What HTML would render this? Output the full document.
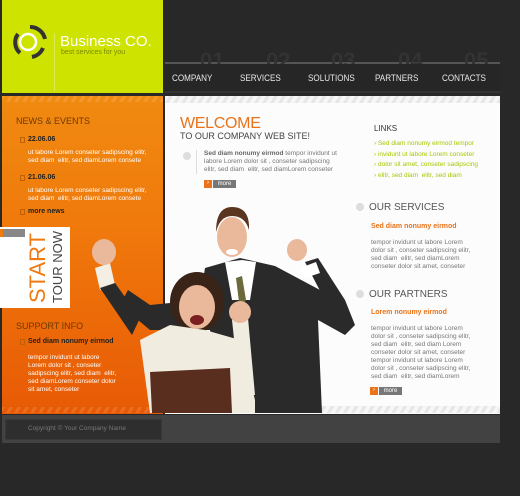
<!DOCTYPE html>
<html><head><meta charset="utf-8">
<style>
*{margin:0;padding:0;box-sizing:border-box}
body{width:520px;height:496px;background:#282828;position:relative;overflow:hidden;font-family:"Liberation Sans",sans-serif}
.a{position:absolute}
.nav span{position:absolute;top:73px;font-size:9px;color:#e8e8e8;font-family:"Liberation Sans Narrow","Liberation Sans",sans-serif;transform:scaleX(.9);transform-origin:left}
.num{position:absolute;top:48px;font-size:22px;font-weight:bold;color:#333}
.sm{font-size:6.5px;line-height:8px}
.stripe{background:repeating-linear-gradient(-60deg,rgba(255,255,255,.12) 0 3px,transparent 3px 7px)}
</style></head><body>
<div class="a" style="left:2px;top:0;width:161px;height:93px;background:#cfe300"></div>
<div class="a" style="left:54px;top:33px;width:1px;height:58px;background:#dcea55"></div>
<svg class="a" style="left:10px;top:22px" width="40" height="40" viewBox="0 0 40 40">
<circle cx="18" cy="20" r="8" fill="none" stroke="#fff" stroke-width="2.5"/>
<path d="M8 12 A14 14 0 0 0 10 31" fill="none" stroke="#333" stroke-width="4"/>
<path d="M20 5 A15 15 0 0 1 35 17" fill="none" stroke="#333" stroke-width="4"/>
<path d="M33 26 A15 15 0 0 1 22 35" fill="none" stroke="#333" stroke-width="4"/>
</svg>
<div class="a" style="left:60px;top:33px;font-size:15px;color:#fff">Business CO.</div>
<div class="a" style="left:61px;top:49px;font-size:7px;color:#7a8a00">best services for you</div>
<div class="a" style="left:165px;top:62px;width:335px;height:2px;background:#555"></div>
<div class="a" style="left:165px;top:91px;width:335px;height:2px;background:#333"></div>
<div class="num" style="left:200px">01</div><div class="num" style="left:266px">02</div><div class="num" style="left:331px">03</div><div class="num" style="left:398px">04</div><div class="num" style="left:464px">05</div>
<div class="a" style="left:165px;top:64px;width:335px;height:27px;background:#262626"></div>
<div class="nav"><span style="left:172px">COMPANY</span><span style="left:240px">SERVICES</span><span style="left:308px">SOLUTIONS</span><span style="left:375px">PARTNERS</span><span style="left:442px">CONTACTS</span></div>
<div class="a" style="left:2px;top:96px;width:161px;height:318px;background:linear-gradient(180deg,#f08a10 0%,#f07a0c 40%,#e85a05 100%)"></div>
<div class="a stripe" style="left:2px;top:96px;width:161px;height:6px"></div>
<div class="a stripe" style="left:2px;top:407px;width:161px;height:6px"></div>
<div class="a" style="left:16px;top:116px;font-size:9px;color:#6b3a00">NEWS &amp; EVENTS</div>
<div class="a" style="left:20px;top:137px;width:5px;height:6px;border:1px solid #c06000"></div>
<div class="a" style="left:28px;top:136px;font-size:7px;font-weight:bold;color:#222">22.06.06</div>
<div class="a sm" style="left:28px;top:149px;color:#fff">ut labore Lorem conseter sadipscing elitr,<br>sed diam&nbsp; elitr, sed diamLorem consete</div>
<div class="a" style="left:20px;top:175px;width:5px;height:6px;border:1px solid #c06000"></div>
<div class="a" style="left:28px;top:174px;font-size:7px;font-weight:bold;color:#222">21.06.06</div>
<div class="a sm" style="left:28px;top:187px;color:#fff">ut labore Lorem conseter sadipscing elitr,<br>sed diam&nbsp; elitr, sed diamLorem consete</div>
<div class="a" style="left:20px;top:209px;width:5px;height:6px;border:1px solid #c06000"></div>
<div class="a" style="left:28px;top:208px;font-size:7px;font-weight:bold;color:#222">more news</div>
<div class="a" style="left:0;top:227px;width:70px;height:81px;background:#fff"></div>
<div class="a" style="left:0;top:229px;width:25px;height:8px;background:#888"></div>
<div class="a" style="left:0;top:229px;width:3px;height:8px;background:#f07a0c"></div>
<div class="a" style="left:27px;top:303px;transform:rotate(-90deg);transform-origin:0 0;font-size:22px;color:#ef7a12;white-space:nowrap;line-height:22px">START</div>
<div class="a" style="left:50px;top:303px;transform:rotate(-90deg);transform-origin:0 0;font-size:13px;color:#444;white-space:nowrap;line-height:15px">TOUR NOW</div>
<div class="a" style="left:16px;top:321px;font-size:9px;color:#6b3a00">SUPPORT INFO</div>
<div class="a" style="left:20px;top:339px;width:5px;height:6px;border:1px solid #c06000"></div>
<div class="a" style="left:28px;top:338px;font-size:7px;font-weight:bold;color:#222">Sed diam nonumy eirmod</div>
<div class="a sm" style="left:28px;top:354px;color:#fff">tempor invidunt ut labore<br>Lorem dolor sit , conseter<br>sadipscing elitr, sed diam&nbsp; elitr,<br>sed diamLorem conseter dolor<br>sit amet, conseter</div>
<div class="a" style="left:165px;top:96px;width:335px;height:318px;background:#fcfcfc"></div>
<div class="a" style="left:165px;top:96px;width:335px;height:7px;background:repeating-linear-gradient(-60deg,#e6e6e6 0 3px,#f6f6f6 3px 7px)"></div>
<div class="a" style="left:165px;top:406px;width:335px;height:7px;background:repeating-linear-gradient(-60deg,#e6e6e6 0 3px,#f6f6f6 3px 7px)"></div>
<div class="a" style="left:180px;top:115px;font-size:16px;color:#e8731a;letter-spacing:-.3px">WELCOME</div>
<div class="a" style="left:180px;top:131px;font-size:9px;color:#444">TO OUR COMPANY WEB SITE!</div>
<div class="a" style="left:183px;top:152px;width:8px;height:8px;border-radius:50%;background:#ddd"></div>
<div class="a" style="left:196px;top:150px;width:1px;height:24px;background:#ddd"></div>
<div class="a sm" style="left:204px;top:150px;color:#777"><b style="color:#666">Sed diam nonumy eirmod</b> tempor invidunt ut<br>labore Lorem dolor sit , conseter sadipscing<br>elitr, sed diam&nbsp; elitr, sed diamLorem conseter</div>
<div class="a" style="left:204px;top:180px;width:8px;height:8px;background:#e8731a;color:#fff;font-size:6px;text-align:center">›</div>
<div class="a" style="left:213px;top:180px;width:23px;height:8px;background:#777;color:#fff;font-size:6px;text-align:center;line-height:8px">more</div>
<div class="a" style="left:374px;top:124px;font-size:8px;color:#333">LINKS</div>
<div class="a sm" style="left:374px;top:139px;color:#a8c800;line-height:10.7px">› Sed diam nonumy eirmod tempor<br>› invidunt ut labore Lorem conseter<br>› dolor sit amet, conseter sadipscing<br>› elitr, sed diam&nbsp; elitr, sed diam</div>
<div class="a" style="left:356px;top:203px;width:8px;height:8px;border-radius:50%;background:#ddd"></div>
<div class="a" style="left:369px;top:202px;font-size:10px;color:#555">OUR SERVICES</div>
<div class="a" style="left:371px;top:223px;font-size:7px;font-weight:bold;color:#e8731a">Sed diam nonumy eirmod</div>
<div class="a sm" style="left:371px;top:239px;color:#777">tempor invidunt ut labore Lorem<br>dolor sit , conseter sadipscing elitr,<br>sed diam&nbsp; elitr, sed diamLorem<br>conseter dolor sit amet, conseter</div>
<div class="a" style="left:356px;top:290px;width:8px;height:8px;border-radius:50%;background:#ddd"></div>
<div class="a" style="left:369px;top:289px;font-size:10px;color:#555">OUR PARTNERS</div>
<div class="a" style="left:371px;top:309px;font-size:7px;font-weight:bold;color:#e8731a">Lorem nonumy eirmod</div>
<div class="a sm" style="left:371px;top:325px;color:#777">tempor invidunt ut labore Lorem<br>dolor sit , conseter sadipscing elitr,<br>sed diam&nbsp; elitr, sed diam Lorem<br>conseter dolor sit amet, conseter<br>tempor invidunt ut labore Lorem<br>dolor sit , conseter sadipscing elitr,<br>sed diam&nbsp; elitr, sed diamLorem</div>
<div class="a" style="left:370px;top:387px;width:8px;height:8px;background:#e8731a;color:#fff;font-size:6px;text-align:center">›</div>
<div class="a" style="left:379px;top:387px;width:23px;height:8px;background:#777;color:#fff;font-size:6px;text-align:center;line-height:8px">more</div>
<svg class="a" style="left:0;top:0" width="520" height="496" viewBox="0 0 520 496">
<path d="M205 268 L240 258 L275 266 L320 290 L345 300 L355 325 L345 335 L318 320 L322 413 L220 413 L210 330 L150 330 L120 305 L128 290 L150 305 L200 300 Z" fill="#2a2a2a"/>
<path d="M305 262 L318 258 L345 300 L330 310 Z" fill="#2a2a2a"/>
<path d="M300 268 L316 262 L320 273 L305 278 Z" fill="#fff"/>
<ellipse cx="297" cy="250" rx="10" ry="11" fill="#eab89a"/>
<path d="M225 262 L242 260 L256 262 L250 300 L232 300 Z" fill="#fff"/>
<path d="M236 278 L242 276 L246 300 L240 310 Z" fill="#6b6a3a"/>
<ellipse cx="232" cy="237" rx="15" ry="20" fill="#eab89a"/>
<path d="M216 232 Q216 207 232 207 Q250 207 249 230 Q245 216 232 216 Q220 216 216 232 Z" fill="#5a3520"/>
<ellipse cx="232" cy="252" rx="6" ry="3" fill="#fff"/>
<path d="M95 268 L110 263 L115 285 L100 290 Z" fill="#f3efe4"/>
<path d="M100 288 L115 283 L140 318 L132 335 Z" fill="#2a2a2a"/>
<ellipse cx="104" cy="252" rx="12" ry="13" fill="#eab89a"/>
<ellipse cx="197" cy="302" rx="27" ry="30" fill="#3a2418"/>
<path d="M140 340 L170 325 L205 330 L240 340 L255 400 L255 413 L150 413 Z" fill="#f1ece0"/>
<path d="M150 372 L230 368 L232 413 L152 413 Z" fill="#5a2e1e"/>
<ellipse cx="197" cy="307" rx="18" ry="22" fill="#eab89a"/>
<ellipse cx="197" cy="320" rx="7" ry="5" fill="#7a2020"/>
<path d="M232 320 L248 318 L255 395 L240 395 Z" fill="#f1ece0"/>
<ellipse cx="240" cy="312" rx="11" ry="11" fill="#eab89a"/>
</svg>
<div class="a" style="left:2px;top:415px;width:498px;height:28px;background:#424242"></div>
<div class="a" style="left:5px;top:419px;width:157px;height:21px;background:#2e2e2e;border:1px solid #383838"></div>
<div class="a" style="left:28px;top:425px;font-size:6.5px;color:#777">Copyright © Your Company Name</div>
</body></html>
